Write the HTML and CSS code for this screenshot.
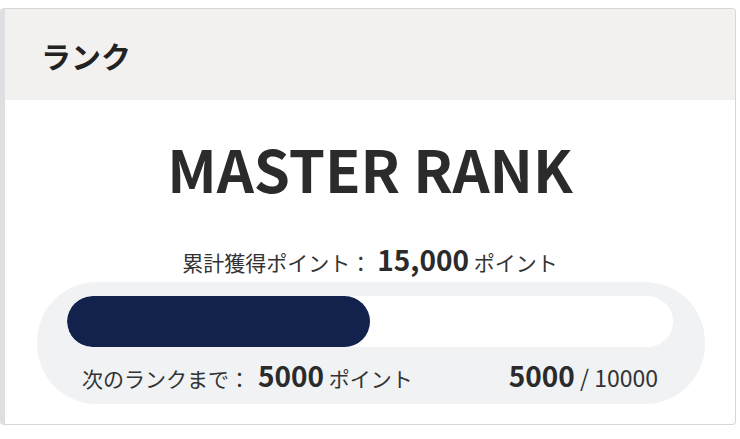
FILE: index.html
```html
<!DOCTYPE html>
<html lang="ja">
  <head>
    <meta charset="UTF-8" />
    <meta name="viewport" content="width=device-width, initial-scale=1.0" />
    <title>ランク</title>
    <link rel="stylesheet" href="styles.css">
  </head>
  <body>
    <div class="card">
      <div class="card-header">
        <h2>ランク</h2>
      </div>
      <div class="card-body">
        <h1 class="rank-name">MASTER RANK</h1>
        <p class="total">累計獲得ポイント：<b>15,000</b> ポイント</p>
        <div class="progress-box">
          <div class="bar">
            <div class="bar-fill" style="width: 50%"></div>
          </div>
          <div class="progress-info">
            <span>次のランクまで：<b>5000</b> ポイント</span>
            <span class="count"><b>5000</b> / 10000</span>
          </div>
        </div>
      </div>
    </div>
  </body>
</html>
```

FILE: styles.css
```css
body {
  margin: 0;
  padding: 8px 4px 0 0;
  background: #fff;
  font-family: "Noto Sans CJK JP", "Noto Sans", sans-serif;
  color: #333;
}
.card {
  border: 1px solid #d6d6d8;
  border-left: 5px solid #dfdfe2;
  border-radius: 4px;
  height: 415px;
  overflow: hidden;
}
.card-header {
  background: #f2f1ef;
  height: 91px;
  display: flex;
  align-items: center;
  padding-left: 36px;
}
.card-header h2 {
  margin: 0;
  font-size: 30px;
  font-weight: bold;
  color: #222;
}
.card-body {
  text-align: center;
}
.rank-name {
  margin: 33px 0 0;
  font-size: 58px;
  line-height: 70px;
  font-weight: bold;
  color: #2b2b2b;
}
.total {
  margin: 41px 0 0;
  font-size: 21px;
  line-height: 30px;
  color: #333;
}
.total b {
  font-size: 28px;
  color: #2b2b2b;
  margin-left: 6px;
}
.progress-box {
  margin: 5px 30px 0 32px;
  background: #f0f2f4;
  border-radius: 60px;
  padding: 14px 32px 6px 30px;
}
.bar {
  height: 51px;
  background: #fff;
  border-radius: 26px;
  overflow: hidden;
}
.bar-fill {
  height: 100%;
  background: #13224d;
  border-radius: 26px;
}
.progress-info {
  display: flex;
  justify-content: space-between;
  align-items: baseline;
  padding: 8px 15px 0 15px;
  font-size: 21px;
  line-height: 40px;
  color: #333;
}
.progress-info b {
  font-size: 28px;
  color: #2b2b2b;
  margin-left: 8px;
}
.count {
  font-size: 23px;
}
.count b {
  margin-left: 0;
}
```
